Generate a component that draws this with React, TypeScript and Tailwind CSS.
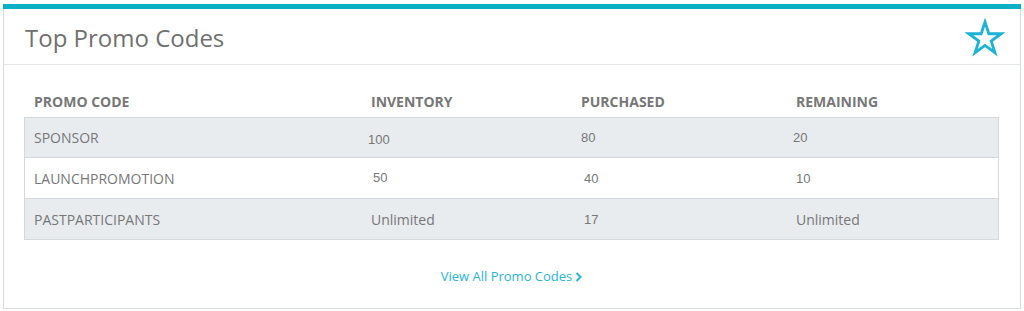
import React from "react";

const rows = [
  { code: "SPONSOR", inv: "100", invNum: true, pur: "80", rem: "20", remNum: true, bg: "bg-[#e9ecef]", h: "h-[39px]", invMt: "mt-[5px]" },
  { code: "LAUNCHPROMOTION", inv: "50", invNum: true, pur: "40", rem: "10", remNum: true, bg: "bg-white", h: "h-[41px]", invMt: "-mt-[1px]" },
  { code: "PASTPARTICIPANTS", inv: "Unlimited", invNum: false, pur: "17", rem: "Unlimited", remNum: false, bg: "bg-[#e9ecef]", h: "h-[41px]", invMt: "" },
];

function StarIcon() {
  const cx = 20, cy = 21, R = 17, r = R * 0.382;
  const pts: string[] = [];
  for (let i = 0; i < 10; i++) {
    const rad = i % 2 === 0 ? R : r;
    const a = -Math.PI / 2 + (i * Math.PI) / 5;
    pts.push(`${(cx + rad * Math.cos(a)).toFixed(2)},${(cy + rad * Math.sin(a)).toFixed(2)}`);
  }
  return (
    <svg width="40" height="40" viewBox="0 0 40 40" className="mt-[2px]">
      <polygon points={pts.join(" ")} fill="none" stroke="#1cb3d4" strokeWidth="2.8" strokeLinejoin="miter" />
    </svg>
  );
}

const num = { fontFamily: '"Liberation Sans", Arial, sans-serif', fontSize: 13 };

export default function App() {
  const font = { fontFamily: '"Open Sans", "Liberation Sans", sans-serif' };
  return (
    <div className="w-[1024px] h-[311px] bg-white pl-[3px] pt-[4px]" style={font}>
      <div className="w-[1018px] h-[305px] border border-[#d7dce0] border-t-0 flex flex-col">
        <div className="h-[5px] bg-[#0aafc4] -mx-px"></div>
        <div className="h-[56px] flex items-center justify-between pl-[21px] pr-[15px] border-b border-[#e3e6e9]">
          <h1 className="text-[24px] text-[#707070] leading-none mt-[2px]">Top Promo Codes</h1>
          <StarIcon />
        </div>
        <div className="pl-[20px] pr-[20px] pt-[23px]">
          <div className="w-[975px]">
            <div className="flex h-[27px] items-center text-[14px] font-bold text-[#777] uppercase">
              <div className="w-[347px] pl-[10px]">Promo Code</div>
              <div className="w-[210px]">Inventory</div>
              <div className="w-[215px]">Purchased</div>
              <div className="flex-1">Remaining</div>
            </div>
            <div className="border border-[#d5d9dd] mt-[2px]">
              {rows.map((r, i) => (
                <div
                  key={r.code}
                  className={`flex ${r.h} items-center text-[14px] text-[#777] ${r.bg} ${i > 0 ? "border-t border-[#d5d9dd]" : ""}`}
                >
                  <div className="w-[346px] pl-[9px]">{r.code}</div>
                  <div
                    className={`w-[210px] ${r.invMt}`}
                    style={r.invNum ? { ...num, paddingLeft: r.inv === "50" ? 2 : 0, marginLeft: r.inv === "100" ? -3 : 0 } : undefined}
                  >
                    {r.inv}
                  </div>
                  <div className="w-[215px] mt-[1px] pl-[3px]" style={num}>
                    {r.pur}
                  </div>
                  <div
                    className={`flex-1 ${r.remNum ? "mt-[1px]" : ""}`}
                    style={r.remNum ? num : undefined}
                  >
                    {r.rem}
                  </div>
                </div>
              ))}
            </div>
          </div>
          <div className="flex justify-center mt-[27px]">
            <a className="flex items-center gap-[3px] text-[13px] text-[#29b5d6] pr-[1px]">
              View All Promo Codes
              <svg width="7" height="10" viewBox="0 0 7 10">
                <path d="M1.5 1 L5.5 5 L1.5 9" fill="none" stroke="#29b5d6" strokeWidth="2" />
              </svg>
            </a>
          </div>
        </div>
      </div>
    </div>
  );
}
